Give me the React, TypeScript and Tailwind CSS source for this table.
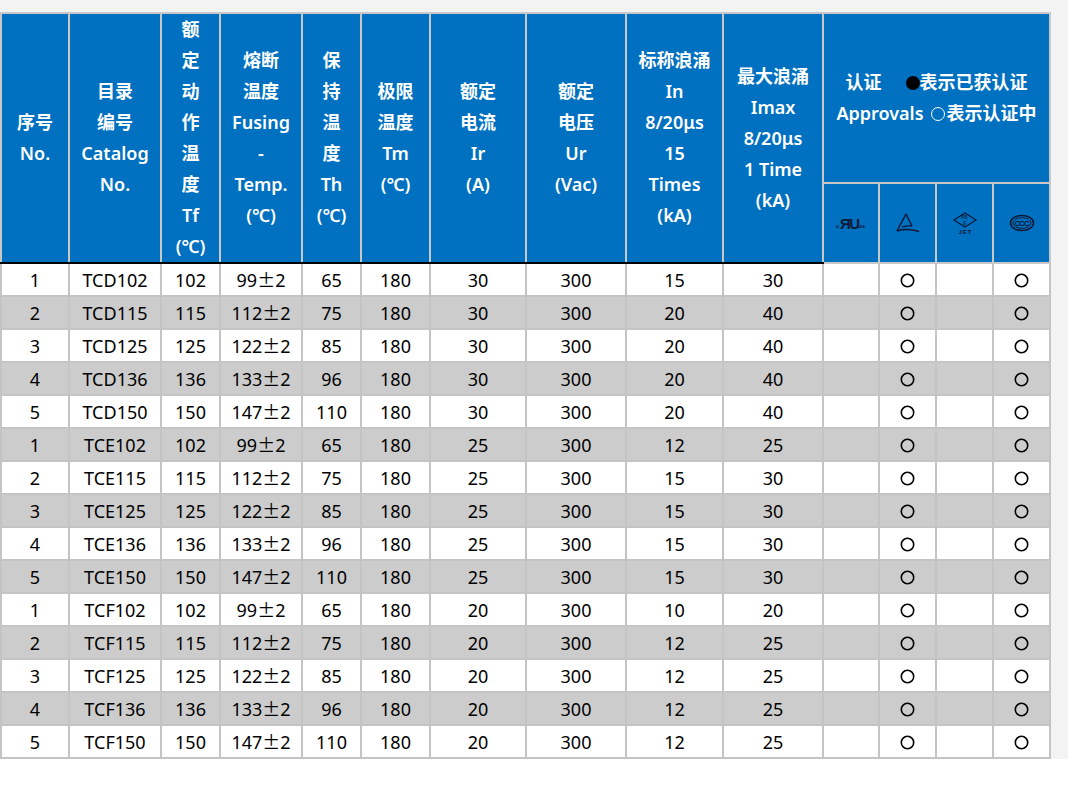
import React from "react";

const rows: string[][] = [
  ["1", "TCD102", "102", "99±2", "65", "180", "30", "300", "15", "30"],
  ["2", "TCD115", "115", "112±2", "75", "180", "30", "300", "20", "40"],
  ["3", "TCD125", "125", "122±2", "85", "180", "30", "300", "20", "40"],
  ["4", "TCD136", "136", "133±2", "96", "180", "30", "300", "20", "40"],
  ["5", "TCD150", "150", "147±2", "110", "180", "30", "300", "20", "40"],
  ["1", "TCE102", "102", "99±2", "65", "180", "25", "300", "12", "25"],
  ["2", "TCE115", "115", "112±2", "75", "180", "25", "300", "15", "30"],
  ["3", "TCE125", "125", "122±2", "85", "180", "25", "300", "15", "30"],
  ["4", "TCE136", "136", "133±2", "96", "180", "25", "300", "15", "30"],
  ["5", "TCE150", "150", "147±2", "110", "180", "25", "300", "15", "30"],
  ["1", "TCF102", "102", "99±2", "65", "180", "20", "300", "10", "20"],
  ["2", "TCF115", "115", "112±2", "75", "180", "20", "300", "12", "25"],
  ["3", "TCF125", "125", "122±2", "85", "180", "20", "300", "12", "25"],
  ["4", "TCF136", "136", "133±2", "96", "180", "20", "300", "12", "25"],
  ["5", "TCF150", "150", "147±2", "110", "180", "20", "300", "12", "25"],
];

const headers: string[][] = [
  ["序号", "No."],
  ["目录", "编号", "Catalog", "No."],
  ["额", "定", "动", "作", "温", "度", "Tf", "(℃)"],
  ["熔断", "温度", "Fusing", "-", "Temp.", "(℃)"],
  ["保", "持", "温", "度", "Th", "(℃)"],
  ["极限", "温度", "Tm", "(℃)"],
  ["额定", "电流", "Ir", "(A)"],
  ["额定", "电压", "Ur", "(Vac)"],
  ["标称浪涌", "In", "8/20μs", "15", "Times", "(kA)"],
  ["最大浪涌", "Imax", "8/20μs", "1 Time", "(kA)"],
];

const widths = [
  "w-[68px]",
  "w-[92px]",
  "w-[59px]",
  "w-[82px]",
  "w-[59px]",
  "w-[69px]",
  "w-[96px]",
  "w-[100px]",
  "w-[97px]",
  "w-[100px]",
  "w-[56px]",
  "w-[57px]",
  "w-[57px]",
  "w-[57px]",
];

const Ring = () => (
  <svg width="15" height="15" viewBox="0 0 15 15" className="inline-block align-middle">
    <circle cx="7.5" cy="7.5" r="6.2" fill="none" stroke="#000" strokeWidth="1.6" />
  </svg>
);

const ICON = "#0b1a36";

const ULIcon = () => (
  <svg width="30" height="16" viewBox="0 0 30 16">
    <text x="0" y="13" fontSize="6" fill={ICON} fontFamily="Liberation Sans, sans-serif">c</text>
    <text x="4" y="14" fontSize="15" fontWeight="bold" fill={ICON} fontFamily="Liberation Sans, sans-serif" letterSpacing="-1.5">ЯU</text>
    <text x="22" y="13" fontSize="6" fill={ICON} fontFamily="Liberation Sans, sans-serif">us</text>
  </svg>
);

const TriIcon = () => (
  <svg width="26" height="22" viewBox="0 0 26 22">
    <path d="M11 2 L2 19 M11 2 L17 14" fill="none" stroke={ICON} strokeWidth="1.5" />
    <path d="M2 19 Q12 16 24 19.5" fill="none" stroke={ICON} strokeWidth="1.5" />
    <path d="M7 15 Q12 13.5 17 14" fill="none" stroke={ICON} strokeWidth="1.3" />
  </svg>
);

const PSEIcon = () => (
  <svg width="26" height="22" viewBox="0 0 26 22">
    <path d="M13 1 L24 8 L13 15 L2 8 Z" fill="none" stroke={ICON} strokeWidth="1.2" />
    <text x="9.5" y="7" fontSize="4.5" fill={ICON} fontFamily="Liberation Sans, sans-serif">PS</text>
    <text x="11.5" y="12.5" fontSize="4.5" fill={ICON} fontFamily="Liberation Sans, sans-serif">E</text>
    <text x="6.5" y="21.5" fontSize="6" fontWeight="bold" fill={ICON} fontFamily="Liberation Sans, sans-serif" letterSpacing="1">JET</text>
  </svg>
);

const CCCIcon = () => (
  <svg width="26" height="18" viewBox="0 0 26 18">
    <ellipse cx="13" cy="9" rx="11.5" ry="7.5" fill="none" stroke={ICON} strokeWidth="1.5" />
    <ellipse cx="13" cy="9" rx="9" ry="5.3" fill="none" stroke={ICON} strokeWidth="1" />
    <text x="5.5" y="12" fontSize="8" fontWeight="bold" fill={ICON} fontFamily="Liberation Sans, sans-serif" letterSpacing="-1.2">CCC</text>
  </svg>
);

const Cell = ({ text }: { text: string }) => {
  const idx = text.indexOf("±");
  if (idx < 0) return <>{text}</>;
  return (
    <>
      {text.slice(0, idx)}
      <span className="font-['Noto_Sans_CJK_SC',sans-serif]">±</span>
      {text.slice(idx + 1)}
    </>
  );
};

export default function App() {
  return (
    <div className="min-h-[787px] bg-white font-['Noto_Sans','Noto_Sans_CJK_SC',sans-serif]">
      <div className="bg-[#f3f3f3] pt-[12px]">
        <table className="w-[1051px] table-fixed border-collapse">
          <colgroup>
            {widths.map((w, i) => (
              <col key={i} className={w} />
            ))}
          </colgroup>
          <thead>
            <tr className="h-[170px]">
              {headers.map((lines, i) => (
                <th
                  key={i}
                  rowSpan={2}
                  className="border-2 border-[#c8c8c8] border-b-black bg-[#0070c0] p-0 text-center align-middle text-[18px] font-semibold leading-[31px] text-white"
                >
                  {lines.map((l, j) => (
                    <div key={j} className="whitespace-nowrap">
                      {l}
                    </div>
                  ))}
                </th>
              ))}
              <th
                colSpan={4}
                className="border-2 border-[#c8c8c8] bg-[#0070c0] p-0 text-center align-middle text-[18px] font-semibold leading-[31px] text-white"
              >
                <div className="flex items-center justify-center whitespace-nowrap">
                  <span>认证</span>
                  <span className="w-[24px]" />
                  <span className="inline-block h-[14px] w-[14px] rounded-full bg-black" />
                  <span>表示已获认证</span>
                </div>
                <div className="flex items-center justify-center whitespace-nowrap">
                  <span>Approvals</span>
                  <span className="w-[7px]" />
                  <span className="inline-block h-[14px] w-[14px] rounded-full border-[1.5px] border-white" />
                  <span className="w-[2px]" />
                  <span>表示认证中</span>
                </div>
              </th>
            </tr>
            <tr className="h-[80px]">
              <th className="border-2 border-[#c8c8c8] bg-[#0070c0] p-0 align-middle">
                <div className="flex justify-center">
                  <ULIcon />
                </div>
              </th>
              <th className="border-2 border-[#c8c8c8] bg-[#0070c0] p-0 align-middle">
                <div className="flex justify-center">
                  <TriIcon />
                </div>
              </th>
              <th className="border-2 border-[#c8c8c8] bg-[#0070c0] p-0 align-middle">
                <div className="flex justify-center">
                  <PSEIcon />
                </div>
              </th>
              <th className="border-2 border-[#c8c8c8] bg-[#0070c0] p-0 align-middle">
                <div className="flex justify-center">
                  <CCCIcon />
                </div>
              </th>
            </tr>
          </thead>
          <tbody>
            {rows.map((r, i) => (
              <tr key={i} className={`h-[33px] ${i % 2 === 1 ? "bg-[#cccccc]" : "bg-white"}`}>
                {r.map((c, j) => (
                  <td
                    key={j}
                    className={`border-2 border-[#c4c4c4] p-0 pt-px text-center align-middle text-[18px] leading-[29px] text-black ${
                      i === 0 ? "border-t-black" : ""
                    }`}
                  >
                    <Cell text={c} />
                  </td>
                ))}
                <td className="border-2 border-[#c4c4c4] p-0" />
                <td className="border-2 border-[#c4c4c4] p-0 text-center align-middle leading-none">
                  <Ring />
                </td>
                <td className="border-2 border-[#c4c4c4] p-0" />
                <td className="border-2 border-[#c4c4c4] p-0 text-center align-middle leading-none">
                  <Ring />
                </td>
              </tr>
            ))}
          </tbody>
        </table>
      </div>
    </div>
  );
}
